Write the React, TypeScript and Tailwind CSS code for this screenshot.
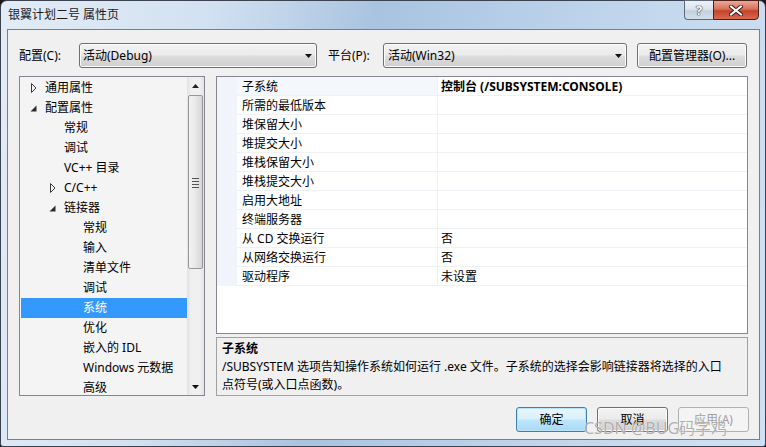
import React from "react";

type TreeItem = { t: string; l: 0 | 1 | 2; a?: "closed" | "open"; sel?: boolean };

const tree: TreeItem[] = [
  { t: "通用属性", l: 0, a: "closed" },
  { t: "配置属性", l: 0, a: "open" },
  { t: "常规", l: 1 },
  { t: "调试", l: 1 },
  { t: "VC++ 目录", l: 1 },
  { t: "C/C++", l: 1, a: "closed" },
  { t: "链接器", l: 1, a: "open" },
  { t: "常规", l: 2 },
  { t: "输入", l: 2 },
  { t: "清单文件", l: 2 },
  { t: "调试", l: 2 },
  { t: "系统", l: 2, sel: true },
  { t: "优化", l: 2 },
  { t: "嵌入的 IDL", l: 2 },
  { t: "Windows 元数据", l: 2 },
  { t: "高级", l: 2 },
];

const props: { n: string; v: string; bold?: boolean }[] = [
  { n: "子系统", v: "控制台 (/SUBSYSTEM:CONSOLE)", bold: true },
  { n: "所需的最低版本", v: "" },
  { n: "堆保留大小", v: "" },
  { n: "堆提交大小", v: "" },
  { n: "堆栈保留大小", v: "" },
  { n: "堆栈提交大小", v: "" },
  { n: "启用大地址", v: "" },
  { n: "终端服务器", v: "" },
  { n: "从 CD 交换运行", v: "否" },
  { n: "从网络交换运行", v: "否" },
  { n: "驱动程序", v: "未设置" },
];

const levelPad = ["pl-[10px]", "pl-[29px]", "pl-[48px]"];

function Arrow({ kind }: { kind?: "closed" | "open" }) {
  return (
    <span className="w-[14px] h-[20px] flex items-center shrink-0">
      {kind === "closed" && (
        <svg width="6" height="10" viewBox="0 0 6 10">
          <polygon points="0.5,0.5 5,5 0.5,9.5" fill="none" stroke="#3a3a3a" strokeWidth="1" />
        </svg>
      )}
      {kind === "open" && (
        <svg width="7" height="7" viewBox="0 0 7 7" className="-ml-[1px]">
          <polygon points="6.5,0.5 6.5,6.5 0.5,6.5" fill="#2a2a2a" />
        </svg>
      )}
    </span>
  );
}

function DownTri() {
  return (
    <svg width="7" height="4" viewBox="0 0 7 4">
      <polygon points="0,0 7,0 3.5,4" fill="#111" />
    </svg>
  );
}

const btn =
  "h-[25px] rounded-[3px] border border-[#707070] bg-[linear-gradient(#f2f2f2_0%,#ebebeb_48%,#dddddd_52%,#cfcfcf_100%)] shadow-[inset_0_0_0_1px_#fcfcfc] flex items-center";

export default function App() {
  return (
    <div className="w-[766px] h-[447px] bg-[#1a1a1a] overflow-hidden relative font-['Noto_Sans','Noto_Sans_CJK_SC',sans-serif] text-[12px] text-[#000]">
      <div className="w-full h-full rounded-t-[7px] rounded-b-[3px] border border-[#3b4350] bg-[linear-gradient(100deg,#e3ecf6_0%,#d2e1f1_25%,#a9c3e0_45%,#b5cde7_60%,#c5d9ee_80%,#cfe0f2_100%)] flex flex-col pl-[6px] pr-[5px] pb-[6px]">
        {/* title bar */}
        <div className="h-[28px] flex items-start shrink-0">
          <div className="pl-[1px] h-[28px] flex items-center text-[12px] text-[#1a1a1a] leading-none">
            银翼计划二号 属性页
          </div>
          <div className="ml-auto flex -mt-[1px] mr-[1px]">
            <div className="w-[29px] h-[20px] rounded-bl-[4px] border border-[#5e6a7a] border-r-0 bg-[linear-gradient(#eef3f8_0%,#dbe4ee_45%,#c3d0de_55%,#d4dfea_100%)] flex items-center justify-center text-[13px] font-bold text-white [text-shadow:0_0_1px_#333,0_0_1px_#333,0_0_1px_#333] leading-none">
              ?
            </div>
            <div className="w-[46px] h-[20px] rounded-br-[4px] border border-[#4a2018] bg-[linear-gradient(#e9a999_0%,#d8705a_45%,#c4432a_55%,#d86a4e_100%)] flex items-center justify-center">
              <svg width="14" height="11" viewBox="0 0 14 11">
                <path d="M2 1.5 L12 9.5 M12 1.5 L2 9.5" stroke="#3b1d16" strokeWidth="4" strokeLinecap="square" />
                <path d="M2 1.5 L12 9.5 M12 1.5 L2 9.5" stroke="#ffffff" strokeWidth="2" strokeLinecap="square" />
              </svg>
            </div>
          </div>
        </div>

        {/* client area */}
        <div className="flex-1 border border-[#6f8196] bg-[#f0f0f0] flex flex-col">
          {/* top row */}
          <div className="flex items-center pl-[11px] mt-[13px] h-[25px]">
            <span className="w-[60px] leading-none">配置(C):</span>
            <div className={`${btn} w-[238px] pl-[3px] pr-[4px] justify-between`}>
              <span className="leading-none">活动(Debug)</span>
              <DownTri />
            </div>
            <span className="ml-[11px] w-[55px] leading-none">平台(P):</span>
            <div className={`${btn} w-[244px] pl-[4px] pr-[4px] justify-between`}>
              <span className="leading-none">活动(Win32)</span>
              <DownTri />
            </div>
            <div className={`${btn} ml-[10px] w-[110px] justify-center`}>
              <span className="leading-none">配置管理器(O)...</span>
            </div>
          </div>

          {/* main panels */}
          <div className="flex mt-[8px] pl-[11px]">
            {/* tree */}
            <div className="w-[186px] h-[320px] border border-[#828790] bg-[#f4f4f4] flex">
              <div className="w-[167px] pt-[1px]">
                {tree.map((it, i) => (
                  <div
                    key={i}
                    className={`ml-[1px] w-[166px] h-[20px] flex items-center ${levelPad[it.l]} ${
                      it.sel ? "bg-[#3399ff] text-white" : ""
                    }`}
                  >
                    <Arrow kind={it.a} />
                    <span className="leading-none whitespace-nowrap">{it.t}</span>
                  </div>
                ))}
              </div>
              {/* scrollbar */}
              <div className="w-[17px] h-full bg-[linear-gradient(90deg,#e2e2e2_0%,#f0f0f0_25%,#f0f0f0_75%,#e2e2e2_100%)] flex flex-col">
                <div className="h-[17px] flex items-center justify-center">
                  <svg width="7" height="4" viewBox="0 0 7 4">
                    <polygon points="0,4 7,4 3.5,0" fill="#222" />
                  </svg>
                </div>
                <div className="mx-[1px] mt-[1px] h-[174px] rounded-[2px] border border-[#979797] bg-[linear-gradient(90deg,#f3f3f3_0%,#e8e8e8_50%,#d6d6d6_100%)] flex flex-col items-center justify-center gap-[2px] pt-[2px]">
                  <div className="w-[7px] h-[1px] bg-[#555]" />
                  <div className="w-[7px] h-[1px] bg-[#555]" />
                  <div className="w-[7px] h-[1px] bg-[#555]" />
                  <div className="w-[7px] h-[1px] bg-[#555]" />
                </div>
                <div className="flex-1" />
                <div className="h-[17px] flex items-center justify-center">
                  <DownTri />
                </div>
              </div>
            </div>

            {/* right column */}
            <div className="ml-[11px] w-[532px] flex flex-col gap-[3px]">
              <div className="h-[258px] border border-[#828790] bg-white">
                {props.map((p, i) => (
                  <div key={i} className="flex h-[19px]">
                    <div className="w-[20px] h-full bg-[#f1f5fb] shrink-0" />
                    <div
                      className={`w-[200px] h-full border-b border-[#eef1f6] pl-[5px] pt-[1px] flex items-center ${
                        i === 0 ? "bg-[#f4f7fc]" : ""
                      }`}
                    >
                      <span className="leading-none whitespace-nowrap">{p.n}</span>
                    </div>
                    <div className="w-[1px] h-full bg-[#eef1f6]" />
                    <div className="flex-1 h-full border-b border-[#eef1f6] pl-[3px] pt-[1px] flex items-center">
                      <span className={`leading-none whitespace-nowrap ${p.bold ? "font-bold" : ""}`}>{p.v}</span>
                    </div>
                  </div>
                ))}
              </div>
              <div className="h-[59px] border border-[#a0a0a0] bg-[#f0f0f0] pl-[5px] pt-[2px] leading-[18px]">
                <div className="font-bold whitespace-nowrap">子系统</div>
                <div className="whitespace-nowrap">
                  /SUBSYSTEM 选项告知操作系统如何运行 .exe 文件。子系统的选择会影响链接器将选择的入口
                </div>
                <div className="whitespace-nowrap">点符号(或入口点函数)。</div>
              </div>
            </div>
          </div>

          {/* buttons */}
          <div className="flex justify-end gap-[10px] pr-[10px] mt-[11px]">
            <div className="w-[71px] h-[25px] rounded-[3px] border border-[#3c7fb1] bg-[linear-gradient(#eaf6fd_0%,#d9f0fc_48%,#bee6fd_52%,#a7d9f5_100%)] shadow-[inset_0_0_0_1px_#b8e3f9] flex items-center justify-center">
              <span className="leading-none">确定</span>
            </div>
            <div className={`${btn} w-[71px] justify-center`}>
              <span className="leading-none">取消</span>
            </div>
            <div className="w-[71px] h-[25px] rounded-[3px] border border-[#adb2b5] bg-[#f4f4f4] flex items-center justify-center text-[#a0a0a0]">
              <span className="leading-none">应用(A)</span>
            </div>
          </div>
        </div>
      </div>

      {/* watermark */}
      <div className="absolute left-[584px] top-[420px] text-[16px] leading-none text-[#8c8c8c]/70 whitespace-nowrap [text-shadow:0_0_1px_#ffffff]">
        CSDN @BUG码字鸡
      </div>
    </div>
  );
}
